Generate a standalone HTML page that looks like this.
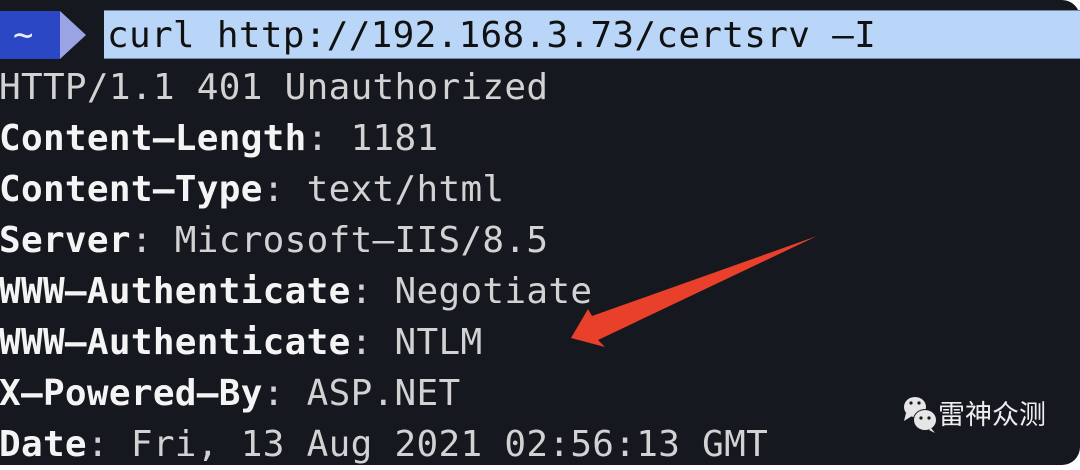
<!DOCTYPE html>
<html><head><meta charset="utf-8"><style>
html,body{margin:0;padding:0}
body{width:1080px;height:465px;background:#fff;overflow:hidden;position:relative}
.term{position:absolute;left:0;top:0;width:1080px;height:465px;background:#16181f;border-radius:0 18px 18px 0}
.mono{font-family:"DejaVu Sans Mono","Liberation Mono",monospace;font-size:36px;letter-spacing:0.3px}
.hl{position:absolute;left:104px;top:10px;width:976px;height:49px;background:#b9d6f8;border-top:1px solid #6f86a8;border-bottom:1px solid #6f86a8;box-sizing:border-box}
.cmd{position:absolute;left:107px;top:11px;line-height:49px;color:#111;white-space:pre}
.pbox{position:absolute;left:0;top:11px;width:60px;height:48px;background:#2b47c4}
.ptri{position:absolute;left:60px;top:11px;width:0;height:0;border-top:24px solid transparent;border-bottom:24px solid transparent;border-left:26px solid #9aa3e3}
.tilde{position:absolute;left:13px;top:12px;line-height:46px;color:#e8ecff;font-family:"DejaVu Sans Mono",monospace;font-size:34px}
.out{position:absolute;left:-1px;top:62px;line-height:51px;color:#d2d2d2;white-space:pre}
.out b{color:#f4f4f4}
.wm{position:absolute;left:938px;top:398px;font-family:"Liberation Sans","Noto Sans CJK SC",sans-serif;font-size:27px;color:#eee;line-height:34px}
</style></head><body>
<div class="term">
<div class="hl"></div>
<div class="pbox"></div><div class="ptri"></div><div class="tilde">~</div>
<div class="cmd mono">curl http://192.168.3.73/certsrv –I</div>
<div class="out mono">HTTP/1.1 401 Unauthorized
<b>Content–Length</b>: 1181
<b>Content–Type</b>: text/html
<b>Server</b>: Microsoft–IIS/8.5
<b>WWW–Authenticate</b>: Negotiate
<b>WWW–Authenticate</b>: NTLM
<b>X–Powered–By</b>: ASP.NET
<b>Date</b>: Fri, 13 Aug 2021 02:56:13 GMT</div>
<svg style="position:absolute;left:0;top:0" width="1080" height="465">
<polygon points="817,236 592,316 588,309 571,338 605,347 598,340" fill="#e8402a"/>
<ellipse cx="915" cy="407" rx="11" ry="10" fill="#e6e6e6"/>
<polygon points="906,413 904,421 912,416" fill="#e6e6e6"/>
<ellipse cx="925" cy="420" rx="12" ry="11" fill="#16181f"/>
<ellipse cx="925" cy="420" rx="11" ry="10" fill="#e6e6e6"/>
<polygon points="931,428 935,433 929,430" fill="#e6e6e6"/>
<circle cx="911" cy="403" r="1.6" fill="#16181f"/><circle cx="919" cy="403" r="1.6" fill="#16181f"/>
<circle cx="921" cy="418" r="1.6" fill="#16181f"/><circle cx="929" cy="418" r="1.6" fill="#16181f"/>
</svg>
<div class="wm">雷神众测</div>
</div>
</body></html>
